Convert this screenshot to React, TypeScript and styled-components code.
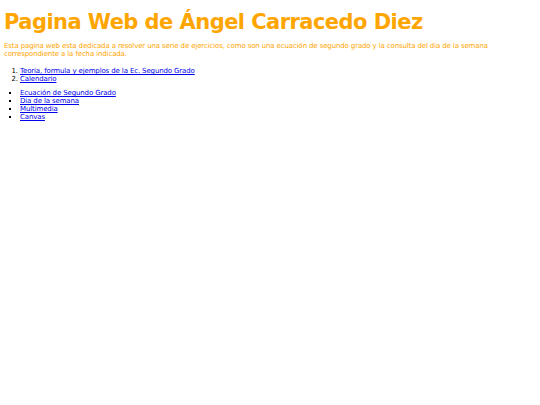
import React from 'react';
import styled, { createGlobalStyle } from 'styled-components';

const GlobalStyle = createGlobalStyle`
  html, body {
    margin: 0;
    background: #fff;
  }
  body {
    padding: 4px;
    font-family: "DejaVu Sans", Verdana, sans-serif;
    font-size: 7px;
    line-height: 8px;
    letter-spacing: -0.13px;
    color: #000;
  }
`;

const Title = styled.h1`
  margin: 6px 0 8px;
  font-size: 21px;
  line-height: 24px;
  letter-spacing: -0.55px;
  font-weight: bold;
  color: #ffa500;
`;

const Intro = styled.p`
  margin: 0 0 9px;
  color: #ffa500;
`;

const NumberedList = styled.ol`
  margin: 0 0 6px;
  padding-left: 16px;
`;

const BulletList = styled.ul`
  margin: 0;
  padding-left: 16px;
  list-style-type: square;
`;

const Link = styled.a`
  color: #0000ee;
  text-decoration: underline;
`;

const App: React.FC = () => {
  return (
    <>
      <GlobalStyle />
      <Title>Pagina Web de Ángel Carracedo Diez</Title>
      <Intro>
        Esta pagina web esta dedicada a resolver una serie de ejercicios, como son una ecuación de
        segundo grado y la consulta del dia de la semana correspondiente a la fecha indicada.
      </Intro>
      <NumberedList>
        <li><Link href="#">Teoria, formula y ejemplos de la Ec. Segundo Grado</Link></li>
        <li><Link href="#">Calendario</Link></li>
      </NumberedList>
      <BulletList>
        <li><Link href="#">Ecuación de Segundo Grado</Link></li>
        <li><Link href="#">Dia de la semana</Link></li>
        <li><Link href="#">Multimedia</Link></li>
        <li><Link href="#">Canvas</Link></li>
      </BulletList>
    </>
  );
};

export default App;
